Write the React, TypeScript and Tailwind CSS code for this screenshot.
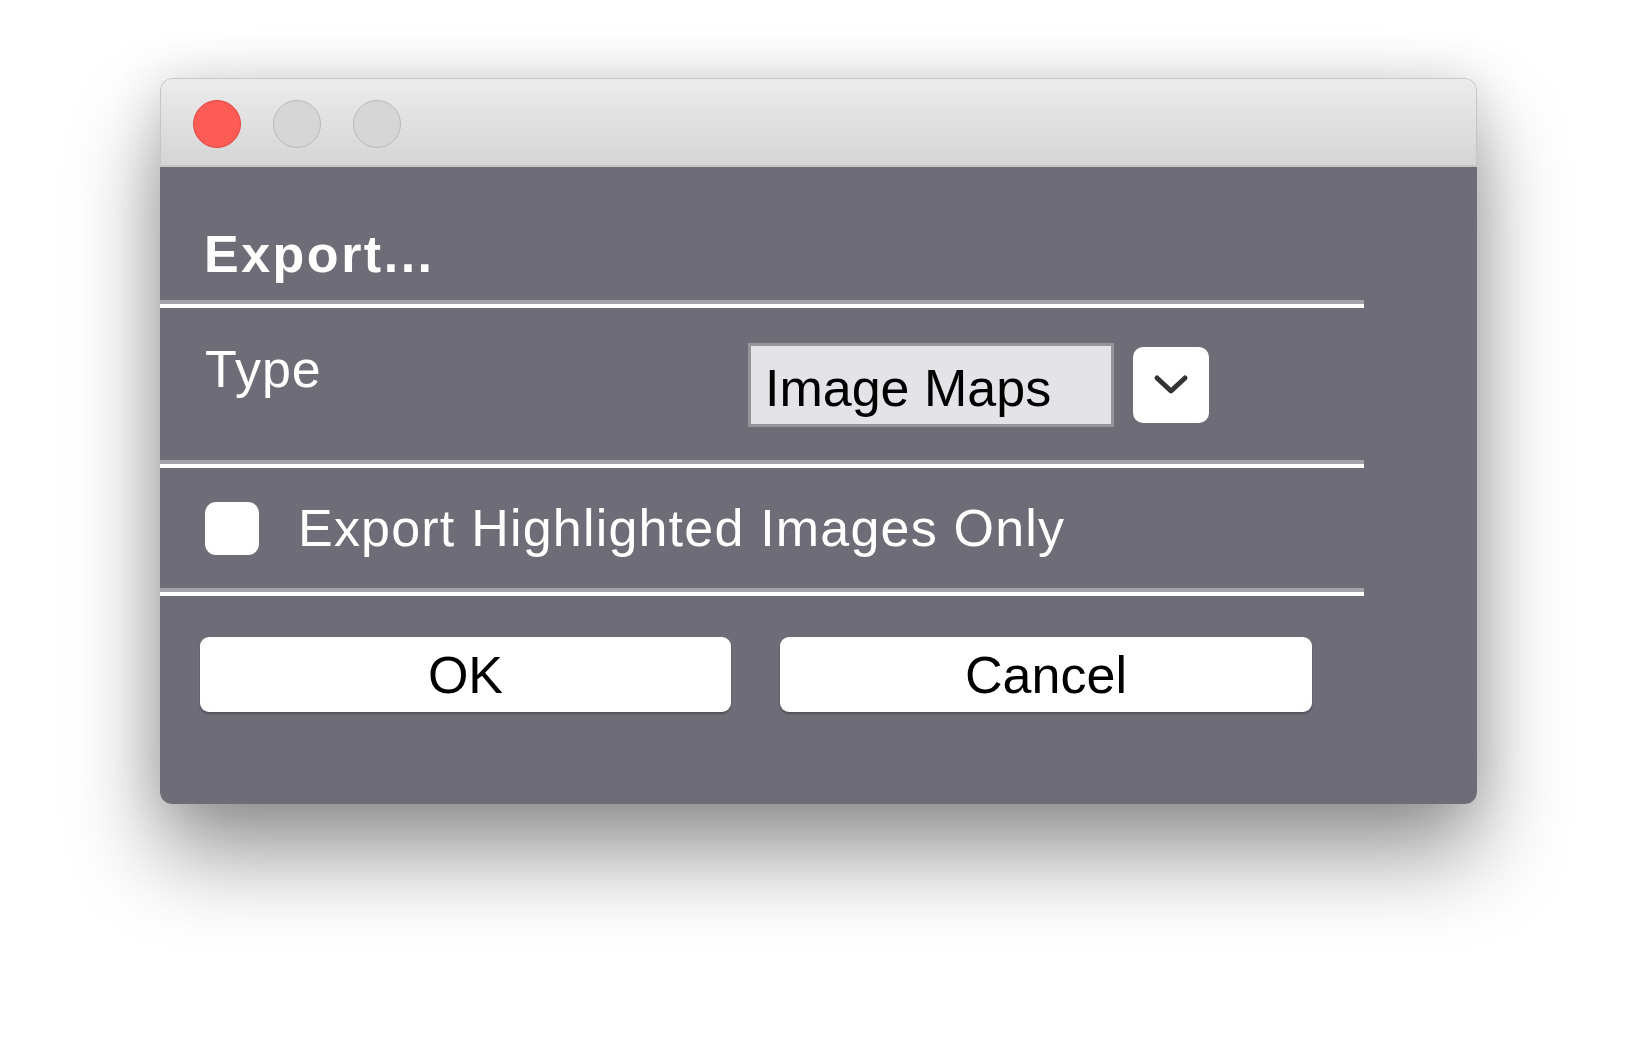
import React, { useState } from 'react';

const font = { fontFamily: '"Liberation Sans", Arial, sans-serif' };

const Separator: React.FC = () => (
    <div className="w-[1204px] h-[8px] flex flex-col">
        <div className="h-[4px] bg-[#a2a2a8]"></div>
        <div className="h-[4px] bg-white"></div>
    </div>
);

export default function App() {
    const [highlightedOnly, setHighlightedOnly] = useState(false);

    return (
        <div className="w-[1636px] h-[1044px] bg-white pt-[78px] pl-[160px]" style={font}>
            <div className="w-[1317px] h-[726px] rounded-[12px] overflow-hidden flex flex-col shadow-[0_50px_90px_rgba(0,0,0,0.42),0_0_50px_rgba(0,0,0,0.12)]">
                {/* Title bar */}
                <div className="h-[89px] shrink-0 flex items-center gap-[32px] pl-[32px] pt-[4px] bg-gradient-to-b from-[#ececec] to-[#d5d5d5] border border-b-2 border-[#c6c6c6] rounded-t-[12px]">
                    <div className="w-[48px] h-[48px] rounded-full bg-[#fd5b56] border border-[#e2463f]"></div>
                    <div className="w-[48px] h-[48px] rounded-full bg-[#d6d6d6] border border-[#b9b9b9]"></div>
                    <div className="w-[48px] h-[48px] rounded-full bg-[#d6d6d6] border border-[#b9b9b9]"></div>
                </div>

                {/* Body */}
                <div className="flex-1 bg-[#6d6c77] flex flex-col">
                    <div className="pt-[61px] pl-[44px] pb-[20px] text-[52px] leading-none font-bold text-white tracking-[2.5px]">
                        Export...
                    </div>
                    <Separator />

                    {/* Type row */}
                    <div className="h-[152px] flex items-start pt-[35px] pl-[45px]">
                        <div className="w-[543px] text-[52px] leading-none text-white tracking-[1px]">Type</div>
                        <div className="flex items-center gap-[19px]">
                            <div className="w-[366px] h-[84px] bg-[#e4e3e8] border-[3px] border-[#96959c] flex items-center pl-[14px] pt-[5px] text-[52px] leading-none text-black">
                                Image Maps
                            </div>
                            <button className="w-[76px] h-[76px] rounded-[10px] bg-white flex items-center justify-center">
                                <svg width="36" height="22" viewBox="0 0 36 22" fill="none">
                                    <path d="M4 4 L18 17 L32 4" stroke="#333333" strokeWidth="5" strokeLinecap="round" strokeLinejoin="round" />
                                </svg>
                            </button>
                        </div>
                    </div>
                    <Separator />

                    {/* Checkbox row */}
                    <div className="h-[120px] flex items-center gap-[39px] pl-[45px]">
                        <button
                            onClick={() => setHighlightedOnly(!highlightedOnly)}
                            className="w-[54px] h-[53px] rounded-[11px] bg-white flex items-center justify-center"
                        >
                            {highlightedOnly && <span className="text-[36px] leading-none text-[#333]">✓</span>}
                        </button>
                        <span className="text-[52px] leading-none text-white tracking-[1.2px]">Export Highlighted Images Only</span>
                    </div>
                    <Separator />

                    {/* Buttons */}
                    <div className="flex gap-[49px] pl-[40px] pt-[41px]">
                        <button className="w-[531px] h-[75px] rounded-[9px] bg-white text-black text-[52px] leading-none shadow-[0_2px_2px_rgba(0,0,0,0.25)]">OK</button>
                        <button className="w-[532px] h-[75px] rounded-[9px] bg-white text-black text-[52px] leading-none shadow-[0_2px_2px_rgba(0,0,0,0.25)]">Cancel</button>
                    </div>
                </div>
            </div>
        </div>
    );
}
